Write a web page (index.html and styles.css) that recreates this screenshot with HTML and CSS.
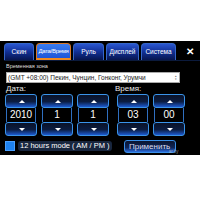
FILE: index.html
```html
<!DOCTYPE html>
<html>
<head>
<meta charset="utf-8">
<link rel="stylesheet" href="styles.css">
</head>
<body>
<div class="screen">
  <div class="tabs">
    <div class="tab w30">Скин</div>
    <div class="tab active w35">Дата/Время</div>
    <div class="tab w31">Руль</div>
    <div class="tab w33">Дисплей</div>
    <div class="tab w35">Система</div>
    <div class="close">✕</div>
  </div>
  <div class="tz-label">Временная зона</div>
  <div class="select"><span>(GMT +08:00) Пекин, Чунцин, Гонконг, Урумчи</span><span class="arrow">▴<br>▾</span></div>
  <div class="labels"><span class="lbl">Дата:</span><span class="lbl time">Время:</span></div>
  <div class="spinners">
    <div class="spin"><div class="btn up"></div><div class="val">2010</div><div class="btn down"></div></div>
    <div class="spin"><div class="btn up"></div><div class="val">1</div><div class="btn down"></div></div>
    <div class="spin"><div class="btn up"></div><div class="val">1</div><div class="btn down"></div></div>
    <div class="spin gapl"><div class="btn up"></div><div class="val">03</div><div class="btn down"></div></div>
    <div class="spin"><div class="btn up"></div><div class="val">00</div><div class="btn down"></div></div>
  </div>
  <div class="bottom">
    <div class="check"></div>
    <div class="mode">12 hours mode ( AM / PM )</div>
    <div class="apply">Применить<span class="wm">ar.by</span></div>
  </div>
</div>
</body>
</html>
```
FILE: styles.css
```css
html, body { margin: 0; padding: 0; background: #fff; }
body { width: 200px; height: 200px; overflow: hidden; font-family: "Liberation Sans", Arial, sans-serif; }
.screen { margin-top: 41px; height: 114px; background: #000; display: flex; flex-direction: column; box-sizing: border-box; padding: 0 0 0 4px; color: #fff; }
.tabs { display: flex; height: 19px; align-items: flex-end; gap: 2px; border-bottom: 1px solid #0b1a3c; }
.tab { height: 17px; box-sizing: border-box; border: 1px solid #3566c8; border-bottom: none; border-radius: 4px 4px 0 0; background: linear-gradient(#2a56d0, #112f94 50%, #07154e); font-size: 6.5px; line-height: 16px; text-align: center; color: #fff; white-space: nowrap; overflow: hidden; }
.tab.active { background: linear-gradient(#3a7cf0, #1f56d8); border-color: #d8782a; border-bottom: 2px solid #f08a20; line-height: 15px; font-size: 6px; letter-spacing: -0.3px; }
.w30 { width: 30px; } .w31 { width: 31px; } .w33 { width: 33px; } .w35 { width: 35px; }
.close { width: 20px; text-align: center; font-size: 10px; line-height: 16px; font-weight: bold; color: #fff; margin-left: 2px; }
.tz-label { font-size: 5.5px; margin: 2px 0 0 2px; height: 7px; line-height: 7px; color: #ddd; }
.select { margin: 2px 0 0 2px; width: 171px; height: 9px; background: #fff; border: 1px solid #aaa; box-sizing: content-box; display: flex; justify-content: space-between; align-items: center; color: #222; font-size: 6.5px; line-height: 9px; padding-left: 1px; }
.arrow { font-size: 3px; line-height: 3px; color: #666; padding-right: 2px; }
.labels { display: flex; height: 10px; margin-top: 1px; font-size: 8px; line-height: 10px; color: #e8e8e8; }
.lbl { margin-left: 2px; }
.lbl.time { margin-left: 89px; }
.spinners { display: flex; gap: 4px; margin-top: 0; margin-left: 1px; }
.spin { width: 32px; display: flex; flex-direction: column; }
.spin.gapl { margin-left: 4px; }
.btn { height: 14px; box-sizing: border-box; border: 1px solid #3a93e8; border-radius: 3px; background: linear-gradient(#0a1228, #0b1c40 55%, #1d5ad0); position: relative; }
.btn::after { content: ""; position: absolute; left: 13px; top: 5px; border-left: 3px solid transparent; border-right: 3px solid transparent; }
.btn.up::after { border-bottom: 3px solid #fff; }
.btn.down::after { border-top: 3px solid #fff; }
.val { height: 14px; box-sizing: border-box; border-left: 1px solid #2f6fc0; border-right: 1px solid #2f6fc0; margin: 0 1px; text-align: center; font-size: 10px; line-height: 14px; color: #fff; }
.bottom { display: flex; align-items: center; margin-top: 3px; height: 14px; }
.check { width: 10px; height: 10px; margin-left: 1px; background: #1e82f0; border: 1px solid #4aa0ff; box-sizing: border-box; }
.mode { margin-left: 3px; background: #18263e; border-radius: 3px; padding: 0 2px; height: 10px; line-height: 10px; font-size: 7.5px; color: #fff; }
.apply { margin-left: 12px; width: 52px; height: 13px; box-sizing: border-box; border: 1px solid #3a8fe8; border-radius: 3px; background: linear-gradient(#0b1530, #0e2558 60%, #2d6ee0); font-size: 8px; line-height: 12px; text-align: center; color: #dde; position: relative; }
.wm { position: absolute; left: 44px; top: 5px; font-size: 4.5px; color: rgba(200,200,200,0.7); white-space: nowrap; }
```
